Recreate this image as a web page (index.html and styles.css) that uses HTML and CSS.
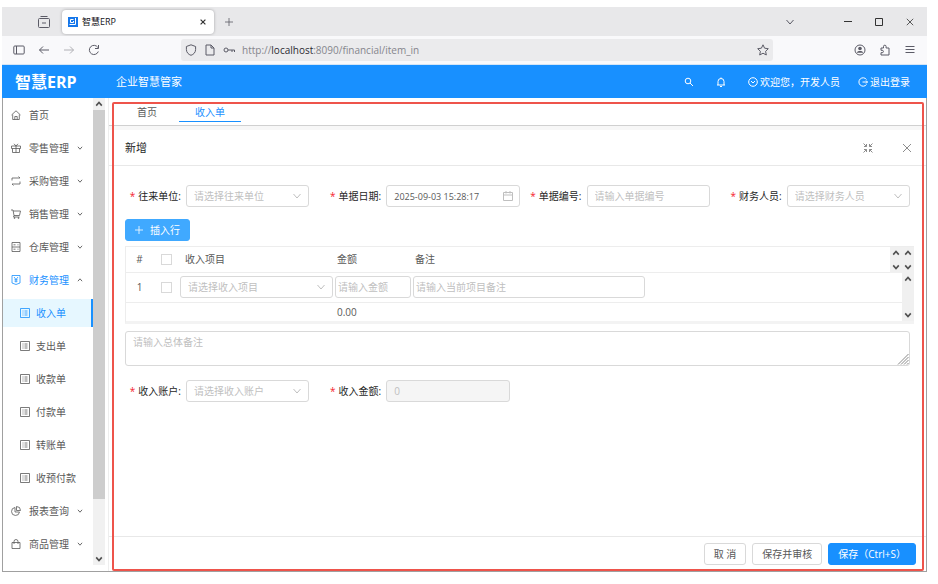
FILE: index.html
```html
<!DOCTYPE html>
<html lang="zh-CN">
<head>
    <meta charset="UTF-8">
    <meta name="viewport" content="width=device-width, initial-scale=1.0">
    <title>智慧ERP</title>
    <link rel="stylesheet" href="styles.css">
</head>
<body>
    <svg class="symbols" aria-hidden="true">
        <symbol id="down" viewBox="0 0 10 10"><path d="M1.5 3l3.5 4 3.5-4"/></symbol>
        <symbol id="up" viewBox="0 0 10 10"><path d="M1.5 7L5 3l3.5 4"/></symbol>
        <symbol id="close" viewBox="0 0 10 10"><path d="M1 1l8 8M9 1L1 9"/></symbol>
        <symbol id="plus" viewBox="0 0 10 10"><path d="M5 0v10M0 5h10"/></symbol>
        <symbol id="list" viewBox="0 0 10 10"><path d="M.5.5h9v9h-9zM2.5 3h1M2.5 5h1M2.5 7h1M4.5 3h3M4.5 5h3M4.5 7h3"/></symbol>
    </svg>

    <div class="window">
        <div class="tab-strip">
            <button class="icon-btn tab-overview" aria-label="tabs"><svg class="icon i12" viewBox="0 0 12 12"><path d="M2.5.5h7M1.5 2.5h9a1 1 0 0 1 1 1v7a1 1 0 0 1-1 1h-9a1 1 0 0 1-1-1v-7a1 1 0 0 1 1-1zM4 7h4"/></svg></button>
            <div class="browser-tab">
                <svg class="favicon" viewBox="0 0 10 10"><path class="fav-bg" d="M0 0h10v10H0z"/><path d="M5.500 2.500h-3v3h3V4M7.500 1v6.500H1.500"/></svg>
                <span>智慧ERP</span>
                <button class="icon-btn dark" aria-label="close tab"><svg class="icon i6"><use href="#close"/></svg></button>
            </div>
            <button class="icon-btn new-tab" aria-label="new tab"><svg class="icon i8"><use href="#plus"/></svg></button>
            <div class="window-buttons">
                <button class="icon-btn list-tabs" aria-label="list tabs"><svg class="icon i10"><use href="#down"/></svg></button>
                <button class="icon-btn dark" aria-label="minimize"><svg class="icon i8" viewBox="0 0 8 8"><path d="M0 3.500h8"/></svg></button>
                <button class="icon-btn dark" aria-label="maximize"><svg class="icon i8" viewBox="0 0 8 8"><path d="M.5.5h7v7h-7z"/></svg></button>
                <button class="icon-btn dark" aria-label="close"><svg class="icon i8"><use href="#close"/></svg></button>
            </div>
        </div>

        <div class="toolbar">
            <div class="nav-buttons">
                <button class="icon-btn" aria-label="sidebar"><svg class="icon i12" viewBox="0 0 12 12"><rect x=".8" y="2" width="10.400" height="8" rx="1"/><path d="M3.500 2v8"/></svg></button>
                <button class="icon-btn" aria-label="back"><svg class="icon i12" viewBox="0 0 12 12"><path d="M11 6H1.500M5 2.500L1.500 6 5 9.500"/></svg></button>
                <button class="icon-btn muted" aria-label="forward"><svg class="icon i12" viewBox="0 0 12 12"><path d="M1 6h9.500M7 2.500L10.500 6 7 9.500"/></svg></button>
                <button class="icon-btn" aria-label="reload"><svg class="icon i12" viewBox="0 0 12 12"><path d="M10.300 7.500A4.600 4.600 0 1 1 9.800 3.400M10.500 1v3.500H7"/></svg></button>
            </div>
            <div class="url-bar">
                <svg class="icon i12" viewBox="0 0 12 12"><path d="M6 .8l4.600 1.700v3C10.600 8.500 8.500 10.500 6 11.300 3.500 10.500 1.400 8.500 1.400 5.500v-3z"/></svg>
                <svg class="icon i12" viewBox="0 0 12 12"><path d="M2 1h5l3 3v7H2zM7 1v3h3"/></svg>
                <svg class="icon i12" viewBox="0 0 12 12"><circle cx="3" cy="6" r="2"/><path d="M5 6h6.500v2M9 6v2"/></svg>
                <span class="url">http://<b>localhost</b>:8090/financial/item_in</span>
                <svg class="icon i12" viewBox="0 0 12 12"><path d="M6 .8l1.600 3.400 3.700.5-2.700 2.600.7 3.700L6 9.200 2.700 11l.7-3.700L.7 4.700l3.700-.5z"/></svg>
            </div>
            <div class="tool-buttons">
                <button class="icon-btn" aria-label="account"><svg class="icon i12" viewBox="0 0 12 12"><circle cx="6" cy="6" r="5"/><circle class="fill" cx="6" cy="4.500" r="1.800"/><path class="fill" d="M2.800 8.800c0-2.500 6.400-2.500 6.400 0z"/></svg></button>
                <button class="icon-btn" aria-label="extensions"><svg class="icon i12" viewBox="0 0 12 12"><path d="M2 4h2.500V2.500a1.300 1.300 0 0 1 2.600 0V4H10v7H2V8.700h1.200a1.200 1.200 0 0 0 0-2.400H2z"/></svg></button>
                <button class="icon-btn" aria-label="menu"><svg class="icon i12" viewBox="0 0 12 12"><path d="M1.500 2.500h9M1.500 5.500h9M1.500 8.500h9"/></svg></button>
            </div>
        </div>

        <header class="header">
            <h1>智慧ERP</h1>
            <p>企业智慧管家</p>
            <nav class="user-nav">
                <button class="icon-btn" aria-label="搜索"><svg class="icon i10" viewBox="0 0 10 10"><circle cx="4" cy="4" r="2.800"/><path d="M6 6l3 3"/></svg></button>
                <button class="icon-btn bell" aria-label="通知"><svg class="icon i10" viewBox="0 0 10 10"><path d="M1 8h8M2 8V4.500a3 3 0 0 1 6 0V8M5 1.500V.5M4 9.500h2"/></svg></button>
                <a href="#"><svg class="icon i10" viewBox="0 0 10 10"><circle cx="5" cy="5" r="4.300"/><path d="M3 4l2 2 2-2"/></svg>欢迎您，开发人员</a>
                <a href="#"><svg class="icon i10" viewBox="0 0 10 10"><path d="M8.500 2.500a4.200 4.200 0 1 0 0 5M4.500 5H9.500M8 3.500L9.500 5 8 6.500"/></svg>退出登录</a>
            </nav>
        </header>

        <div class="app">
            <aside class="sidebar">
                <ul class="menu">
                    <li><a href="#"><svg class="icon i10" viewBox="0 0 10 10"><path d="M.5 5L5 .8 9.500 5M1.700 4.500v5h6.600v-5M3.800 9.500V6.500h2.400v3"/></svg>首页</a></li>
                    <li><a href="#"><svg class="icon i10" viewBox="0 0 10 10"><path d="M.5 3h9v2.500h-9zM1.500 5.500v4h7v-4M5 3v6.500M5 3L3 .8M5 3L7 .8"/></svg><span>零售管理</span><svg class="icon i6"><use href="#down"/></svg></a></li>
                    <li><a href="#"><svg class="icon i10" viewBox="0 0 10 10"><path d="M1 4.500V2h8M7.500.5L9 2M9 5.500V8H1M2.500 9.500L1 8"/></svg><span>采购管理</span><svg class="icon i6"><use href="#down"/></svg></a></li>
                    <li><a href="#"><svg class="icon i10" viewBox="0 0 10 10"><path d="M0 1h2l1 5.500h5.500L9.500 2H2.200M3 6.500L2.500 8h6"/><circle cx="3.500" cy="9" r=".5"/><circle cx="7.500" cy="9" r=".5"/></svg><span>销售管理</span><svg class="icon i6"><use href="#down"/></svg></a></li>
                    <li><a href="#"><svg class="icon i10" viewBox="0 0 10 10"><path d="M1 .5h8v9H1zM1 5h8M2.500 2.800h2M2.500 7.200h2M6.500 2.800h1M6.500 7.200h1"/></svg><span>仓库管理</span><svg class="icon i6"><use href="#down"/></svg></a></li>
                    <li class="open"><a href="#"><svg class="icon i10" viewBox="0 0 10 10"><path d="M1 .5h8v7.500L5 9.500 1 8zM3 2l2 2.500L7 2M5 4.500V7.500M3.500 4.700h3M3.500 6.200h3"/></svg><span>财务管理</span><svg class="icon i6"><use href="#up"/></svg></a></li>
                    <li class="sub active"><a href="#"><svg class="icon i10"><use href="#list"/></svg>收入单</a></li>
                    <li class="sub"><a href="#"><svg class="icon i10"><use href="#list"/></svg>支出单</a></li>
                    <li class="sub"><a href="#"><svg class="icon i10"><use href="#list"/></svg>收款单</a></li>
                    <li class="sub"><a href="#"><svg class="icon i10"><use href="#list"/></svg>付款单</a></li>
                    <li class="sub"><a href="#"><svg class="icon i10"><use href="#list"/></svg>转账单</a></li>
                    <li class="sub"><a href="#"><svg class="icon i10"><use href="#list"/></svg>收预付款</a></li>
                    <li><a href="#"><svg class="icon i10" viewBox="0 0 10 10"><path d="M4 1.500A4 4 0 1 0 8.500 6H4zM5.500.5A4 4 0 0 1 9.500 4.500h-4z"/></svg><span>报表查询</span><svg class="icon i6"><use href="#down"/></svg></a></li>
                    <li><a href="#"><svg class="icon i10" viewBox="0 0 10 10"><path d="M1 3.500h8v6H1zM3 5V2.500a2 2 0 0 1 4 0V5"/></svg><span>商品管理</span><svg class="icon i6"><use href="#down"/></svg></a></li>
                </ul>
                <div class="scrollbar">
                    <svg class="icon i8"><use href="#up"/></svg>
                    <div class="thumb"></div>
                    <div class="track"></div>
                    <svg class="icon i8"><use href="#down"/></svg>
                </div>
            </aside>

            <main class="content">
                <nav class="page-tabs">
                    <a href="#">首页</a>
                    <a href="#" class="current">收入单</a>
                </nav>

                <section class="modal">
                    <div class="modal-header">
                        <h2>新增</h2>
                        <button class="icon-btn" aria-label="退出全屏"><svg class="icon i10" viewBox="0 0 10 10"><path d="M.5.5L3.500 3.500M1 3.500h2.500V1M9.500.5L6.500 3.500M9 3.500H6.500V1M.5 9.500L3.500 6.500M1 6.500h2.500V9M9.500 9.500L6.500 6.500M9 6.500H6.500V9"/></svg></button>
                        <button class="icon-btn" aria-label="关闭"><svg class="icon i10"><use href="#close"/></svg></button>
                    </div>

                    <form class="modal-body">
                        <div class="form-row">
                            <div class="field">
                                <label for="partner">往来单位:</label>
                                <div class="control">
                                    <select id="partner"><option>请选择往来单位</option></select>
                                    <svg class="icon i10"><use href="#down"/></svg>
                                </div>
                            </div>
                            <div class="field date">
                                <label for="bill-date">单据日期:</label>
                                <div class="control">
                                    <input id="bill-date" type="text" value="2025-09-03 15:28:17">
                                    <svg class="icon i10" viewBox="0 0 10 10"><path d="M.5 1.500h9v8h-9zM.5 4h9M3 0v2.500M7 0v2.500"/></svg>
                                </div>
                            </div>
                            <div class="field">
                                <label for="bill-no">单据编号:</label>
                                <div class="control"><input id="bill-no" type="text" placeholder="请输入单据编号"></div>
                            </div>
                            <div class="field">
                                <label for="staff">财务人员:</label>
                                <div class="control">
                                    <select id="staff"><option>请选择财务人员</option></select>
                                    <svg class="icon i10"><use href="#down"/></svg>
                                </div>
                            </div>
                        </div>

                        <button type="button" class="btn insert"><svg class="icon i8"><use href="#plus"/></svg>插入行</button>

                        <div class="grid">
                            <div class="grid-part">
                                <table>
                                    <colgroup><col class="c-no"><col class="c-check"><col class="c-item"><col class="c-amount"><col></colgroup>
                                    <thead>
                                        <tr>
                                            <th class="center">#</th>
                                            <th class="center"><input type="checkbox" aria-label="全选"></th>
                                            <th class="item">收入项目</th>
                                            <th>金额</th>
                                            <th>备注</th>
                                        </tr>
                                    </thead>
                                </table>
                                <div class="grid-scroll"><svg class="icon i8"><use href="#up"/></svg><svg class="icon i8"><use href="#down"/></svg></div>
                                <div class="grid-scroll"><svg class="icon i8"><use href="#up"/></svg><svg class="icon i8"><use href="#down"/></svg></div>
                            </div>
                            <div class="grid-part">
                                <table>
                                    <colgroup><col class="c-no"><col class="c-check"><col class="c-item"><col class="c-amount"><col></colgroup>
                                    <tbody>
                                        <tr>
                                            <td class="center">1</td>
                                            <td class="center"><input type="checkbox" aria-label="选择第1行"></td>
                                            <td class="edit">
                                                <div class="control">
                                                    <select aria-label="收入项目"><option>请选择收入项目</option></select>
                                                    <svg class="icon i10"><use href="#down"/></svg>
                                                </div>
                                            </td>
                                            <td class="edit"><input type="text" class="tight" aria-label="金额" placeholder="请输入金额"></td>
                                            <td class="edit"><input type="text" class="tight note" aria-label="备注" placeholder="请输入当前项目备注"></td>
                                        </tr>
                                    </tbody>
                                    <tfoot>
                                        <tr><td></td><td></td><td></td><td>0.00</td><td></td></tr>
                                    </tfoot>
                                </table>
                                <div class="grid-scroll"><svg class="icon i8"><use href="#up"/></svg><svg class="icon i8"><use href="#down"/></svg></div>
                            </div>
                        </div>

                        <div class="remark">
                            <textarea aria-label="总体备注" placeholder="请输入总体备注"></textarea>
                            <svg class="icon i12" viewBox="0 0 12 12"><path d="M1 11.500L11.500 1M4 11.500L11.500 4M7 11.500L11.500 7M10 11.500l1.500-1.500"/></svg>
                        </div>

                        <div class="form-row">
                            <div class="field">
                                <label for="account">收入账户:</label>
                                <div class="control">
                                    <select id="account"><option>请选择收入账户</option></select>
                                    <svg class="icon i10"><use href="#down"/></svg>
                                </div>
                            </div>
                            <div class="field">
                                <label for="total">收入金额:</label>
                                <div class="control"><input id="total" type="text" value="0" disabled></div>
                            </div>
                        </div>
                    </form>

                    <div class="modal-footer">
                        <button class="btn">取 消</button>
                        <button class="btn">保存并审核</button>
                        <button class="btn primary">保存（Ctrl+S）</button>
                    </div>
                </section>
                <div class="highlight"></div>
            </main>
        </div>
    </div>
</body>
</html>
```

FILE: styles.css
```css
* {
    box-sizing: border-box;
}

body {
    margin: 0;
    padding: 7px 11px 12px 2px;
    min-height: 100vh;
    display: flex;
    background-color: #fff;
    color: #595959;
    font-family: 'Open Sans', 'Noto Sans CJK SC', sans-serif;
    font-size: 10px;
    line-height: 16px;
}

h1, h2, p, ul {
    margin: 0;
    padding: 0;
}

a {
    color: inherit;
    text-decoration: none;
}

button, input, select, textarea {
    font: inherit;
    color: inherit;
}

.symbols {
    position: absolute;
    width: 0;
    height: 0;
}

.icon {
    flex: none;
    display: block;
    fill: none;
    stroke: currentColor;
    stroke-width: 1;
}

.icon .fill {
    fill: currentColor;
    stroke: none;
}

.i6 { width: 6px; height: 6px; stroke-width: 2; }
.i8 { width: 8px; height: 8px; }
.i10 { width: 10px; height: 10px; }
.i12 { width: 12px; height: 12px; }

.icon-btn {
    padding: 0;
    border: 0;
    background: none;
    display: flex;
    cursor: pointer;
}

.window {
    flex: 1;
    min-width: 0;
    display: flex;
    flex-direction: column;
}

/* browser chrome */
.tab-strip {
    display: flex;
    align-items: center;
    height: 29px;
    padding: 0 13px 0 36px;
    background-color: #e8e8ea;
    color: #5b5b66;
}

.browser-tab {
    display: flex;
    align-items: center;
    width: 152px;
    height: 24px;
    margin-left: 12px;
    padding: 0 8px 0 6px;
    background-color: #fff;
    border-radius: 4px;
    box-shadow: 0 0 3px rgba(0, 0, 0, 0.3);
    color: #15141a;
    font-size: 9px;
}

.browser-tab span {
    flex: 1;
    margin-left: 4px;
}

.favicon {
    width: 10px;
    height: 10px;
    fill: none;
    stroke: #fff;
}

.fav-bg {
    fill: #1677ea;
    stroke: none;
}

.new-tab {
    margin-left: 11px;
}

.window-buttons {
    display: flex;
    align-items: center;
    gap: 23px;
    margin-left: auto;
}

.list-tabs {
    margin-right: 26px;
}

.dark {
    color: #333;
}

.muted {
    color: #b0b0b5;
}

.toolbar {
    display: flex;
    align-items: center;
    height: 29px;
    padding: 0 11px;
    background-color: #f9f9fb;
    border-bottom: 1px solid #d5e5f5;
    color: #5b5b66;
}

.nav-buttons,
.tool-buttons {
    display: flex;
    gap: 13px;
}

.url-bar {
    flex: 1;
    display: flex;
    align-items: center;
    gap: 7px;
    height: 22px;
    margin: 0 81px;
    padding: 0 4px;
    background-color: #ebebed;
    border-radius: 3px;
}

.url {
    flex: 1;
    color: #85858c;
}

.url b {
    color: #2b2a33;
    font-weight: 400;
}

/* app header */
.header {
    display: flex;
    align-items: center;
    height: 33px;
    padding: 0 17px 0 13px;
    background-color: #1890ff;
    color: #fff;
}

.header h1 {
    width: 101px;
    font-size: 16px;
    line-height: 24px;
}

.header p {
    font-size: 11px;
}

.user-nav {
    display: flex;
    align-items: center;
    gap: 18px;
    margin-left: auto;
}

.user-nav a {
    display: flex;
    align-items: center;
    gap: 2px;
}

.user-nav .bell {
    margin: 0 4px;
}

/* sidebar */
.app {
    flex: 1;
    display: flex;
    border: 1px solid #a0a0a0;
    border-top: 0;
}

.sidebar {
    flex: none;
    display: flex;
    width: 102px;
}

.menu {
    flex: 1;
    padding-top: 3px;
    list-style: none;
}

.menu li {
    height: 28px;
    margin-bottom: 5px;
}

.menu a {
    display: flex;
    align-items: center;
    gap: 8px;
    height: 100%;
    padding-left: 8px;
}

.menu .i10 {
    stroke-width: 0.8;
}

.menu .i6 {
    stroke-width: 1.5;
}

.menu .sub a {
    padding-left: 17px;
    gap: 6px;
}

.menu .open {
    color: #1890ff;
}

.menu .open .i6 {
    color: #595959;
}

.menu .active {
    background-color: #e6f7ff;
    border-right: 2px solid #1890ff;
    color: #1890ff;
}

.scrollbar {
    display: flex;
    flex-direction: column;
    align-items: center;
    width: 12px;
    margin-bottom: 6px;
    padding: 2px 0;
    background-color: #f1f1f1;
}

.thumb {
    flex: 7;
    width: 100%;
    margin-top: 2px;
    background-color: #cdcdcd;
}

.track {
    flex: 1;
}

/* page content */
.content {
    position: relative;
    flex: 1;
    min-width: 0;
    display: flex;
    flex-direction: column;
    margin-left: 3px;
    border-left: 1px solid #eee;
}

.page-tabs {
    display: flex;
    gap: 6px;
    height: 28px;
    padding-left: 12px;
    border-bottom: 1px solid #d0d0d0;
}

.page-tabs a {
    height: 24px;
    padding: 6px 16px 0;
}

.page-tabs .current {
    border-bottom: 1px solid #1890ff;
    color: #1890ff;
}

.modal {
    flex: 1;
    display: flex;
    flex-direction: column;
    border-top: 4px solid #f7f7f7;
}

.modal-header {
    display: flex;
    align-items: center;
    gap: 29px;
    height: 36px;
    padding: 0 14px 0 16px;
    border-bottom: 1px solid #e8e8e8;
    color: #8c8c8c;
}

.modal-header h2 {
    flex: 1;
    color: #262626;
    font-size: 11px;
    font-weight: 400;
}

.modal-body {
    flex: 1;
    padding: 19px 0 0 16px;
}

.form-row {
    display: grid;
    grid-template-columns: repeat(4, 1fr);
}

.field {
    display: flex;
    align-items: center;
    padding-right: 16px;
}

.field.date {
    padding-right: 6px;
}

.field label {
    flex: none;
    width: 61px;
    padding-right: 5px;
    color: #262626;
    text-align: right;
    white-space: nowrap;
}

.field label::before {
    content: '*';
    margin-right: 3px;
    color: #f5222d;
}

.control {
    position: relative;
    flex: 1;
    min-width: 0;
}

.control .icon {
    position: absolute;
    top: 6px;
    right: 7px;
    color: #bfbfbf;
    pointer-events: none;
}

input[type="text"],
select {
    display: block;
    width: 100%;
    height: 22px;
    padding: 0 7px;
    appearance: none;
    background-color: #fff;
    border: 1px solid #d9d9d9;
    border-radius: 3px;
}

select,
::placeholder {
    color: #bfbfbf;
    opacity: 1;
}

#bill-date {
    font-size: 9px;
}

input:disabled {
    background-color: #f5f5f5;
    color: #bfbfbf;
}

input[type="checkbox"] {
    display: block;
    width: 11px;
    height: 11px;
    margin: 0 auto;
    appearance: none;
    background-color: #fff;
    border: 1px solid #d9d9d9;
}

.btn {
    height: 22px;
    padding: 0 9px;
    background-color: #fff;
    border: 1px solid #d9d9d9;
    border-radius: 3px;
    line-height: 16px;
    cursor: pointer;
}

.btn.primary {
    background-color: #1890ff;
    border-color: #1890ff;
    color: #fff;
}

.btn.insert {
    display: flex;
    align-items: center;
    gap: 7px;
    margin: 12px 0 5px;
    background-color: #40a9ff;
    border-color: #40a9ff;
    color: #fff;
}

/* item grid */
.grid {
    margin-right: 12px;
    border: 1px solid #ededed;
    border-right: 0;
    border-bottom: 3px solid #f3f3f3;
}

.grid-part {
    display: flex;
}

table {
    flex: 1;
    min-width: 0;
    table-layout: fixed;
    border-collapse: collapse;
}

.c-no { width: 27px; }
.c-check { width: 27px; }
.c-item { width: 155px; }
.c-amount { width: 78px; }

th, td {
    padding: 0 2px;
    font-weight: 400;
    text-align: left;
}

th {
    height: 25px;
    border-bottom: 1px solid #ededed;
}

th.item {
    padding-left: 5px;
}

tbody td {
    height: 30px;
    border-bottom: 1px solid #ededed;
}

tfoot td {
    height: 18px;
}

th.center, td.center {
    padding: 0;
    text-align: center;
}

td.edit {
    padding: 0 2px 0 0;
}

input[type="text"].tight {
    padding: 0 2px;
}

input[type="text"].note {
    max-width: 232px;
}

.grid-scroll {
    display: flex;
    flex-direction: column;
    align-items: center;
    justify-content: space-between;
    width: 12px;
    padding: 2px 0;
    background-color: #f0f0f0;
}

.grid-scroll .icon,
.scrollbar .icon {
    color: #505050;
    stroke-width: 2;
}

.remark {
    position: relative;
    margin: 7px 16px 14px 0;
}

.remark textarea {
    display: block;
    width: 100%;
    height: 35px;
    padding: 2px 7px;
    border: 1px solid #d9d9d9;
    border-radius: 3px;
    resize: none;
}

.remark .icon {
    position: absolute;
    right: 1px;
    bottom: 1px;
    color: #888;
}

.modal-footer {
    display: flex;
    justify-content: flex-end;
    gap: 6px;
    padding: 6px 10px 6px 0;
    border-top: 1px solid #e8e8e8;
}

/* red frame drawn over the page area */
.highlight {
    position: absolute;
    top: 4px;
    right: 2px;
    bottom: 0;
    left: 3px;
    border: 2px solid #ee544b;
    border-radius: 2px;
    pointer-events: none;
}
```
